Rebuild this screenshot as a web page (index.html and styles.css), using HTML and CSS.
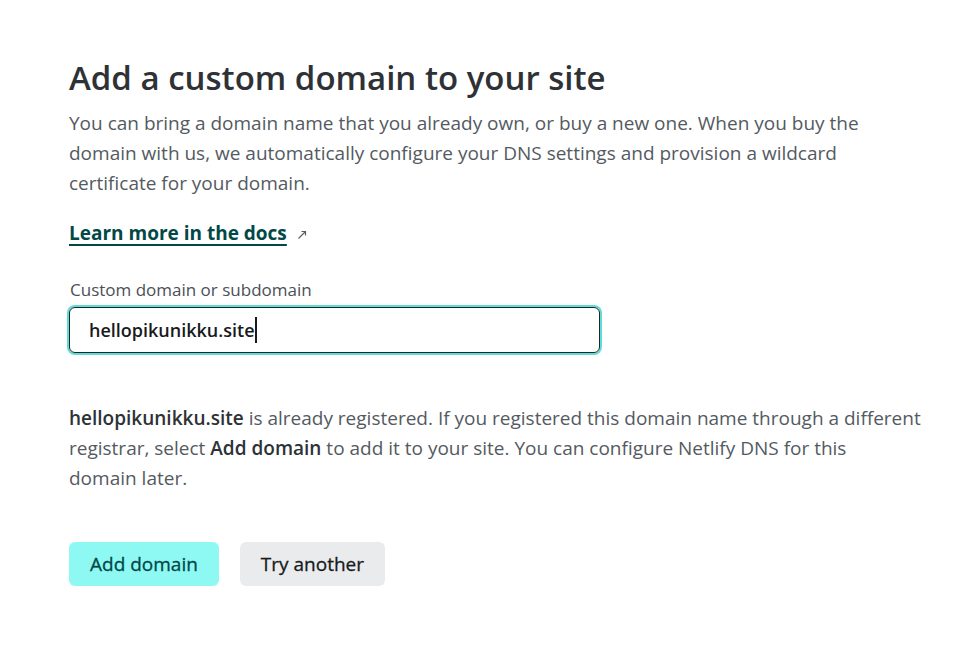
FILE: index.html
```html
<!DOCTYPE html>
<html lang="en">
<head>
<meta charset="utf-8">
<title>Add a custom domain</title>
<link rel="stylesheet" href="styles.css">
</head>
<body>
<main class="page">
  <h1 class="title">Add a custom domain to your site</h1>
  <p class="lead">You can bring a domain name that you already own, or buy a new one. When you buy the domain with us, we automatically configure your DNS settings and provision a wildcard certificate for your domain.</p>
  <p class="docs"><a class="docs-link" href="#">Learn more in the docs</a><svg class="ext" width="11" height="11" viewBox="0 0 11 11" aria-hidden="true"><path d="M1.5 9.5 L8.5 2.5 M4.5 2.5 H8.5 V6.5" fill="none" stroke="#5a5f66" stroke-width="1.2"/></svg></p>
  <div class="field-label">Custom domain or subdomain</div>
  <div class="input" role="textbox"><span class="value">hellopikunikku.site</span><span class="caret"></span></div>
  <p class="notice"><strong>hellopikunikku.site</strong> is already registered. If you registered this domain name through a different registrar, select <strong>Add domain</strong> to add it to your site. You can configure Netlify DNS for this<br>domain later.</p>
  <div class="actions">
    <button class="btn btn-primary" type="button">Add domain</button>
    <button class="btn btn-secondary" type="button">Try another</button>
  </div>
</main>
</body>
</html>
```
FILE: styles.css
```css
* { box-sizing: border-box; }
html, body { margin: 0; padding: 0; background: #fff; }
body {
  font-family: "Open Sans", "Noto Sans", "Liberation Sans", sans-serif;
  color: #545a61;
}
.page {
  padding: 56px 0 0 69px;
  width: 930px;
}
.title {
  margin: 0;
  font-size: 33px;
  line-height: 44px;
  font-weight: 600;
  color: #2e3236;
}
.lead {
  margin: 8px 0 0;
  font-size: 19px;
  line-height: 30px;
  max-width: 810px;
}
.docs {
  margin: 20px 0 0;
  font-size: 19px;
  line-height: 30px;
  display: flex;
  align-items: center;
  gap: 10px;
}
.docs-link {
  color: #014847;
  font-weight: 700;
  text-decoration: underline;
  text-decoration-thickness: 2px;
  text-underline-offset: 4px;
}
.ext { margin-top: 3px; }
.field-label {
  margin: 30px 0 0 1px;
  font-size: 17px;
  line-height: 24px;
  font-weight: 400;
  color: #4a5057;
}
.input {
  display: flex;
  align-items: center;
  margin-top: 5px;
  width: 531px;
  height: 46px;
  padding: 0 19px;
  border: 1px solid #1f2426;
  border-radius: 6px;
  box-shadow: 0 0 0 2px #5fdcd6;
  font-size: 18px;
  font-weight: 600;
  color: #181a1c;
}
.caret {
  display: inline-block;
  width: 2px;
  height: 26px;
  background: #181a1c;
}
.notice {
  margin: 50px 0 0;
  font-size: 19px;
  line-height: 30px;
  max-width: 860px;
}
.notice strong { font-weight: 600; color: #2e3236; }
.actions {
  display: flex;
  gap: 21px;
  margin-top: 49px;
}
.btn {
  height: 44px;
  padding: 0 21px;
  border: 0;
  border-radius: 6px;
  font-family: inherit;
  font-size: 19px;
  font-weight: 400;
  -webkit-text-stroke: 0.3px currentColor;
}
.btn-primary { background: #8ef9f3; color: #014847; }
.btn-secondary { background: #e9ebed; color: #181a1c; }
```
